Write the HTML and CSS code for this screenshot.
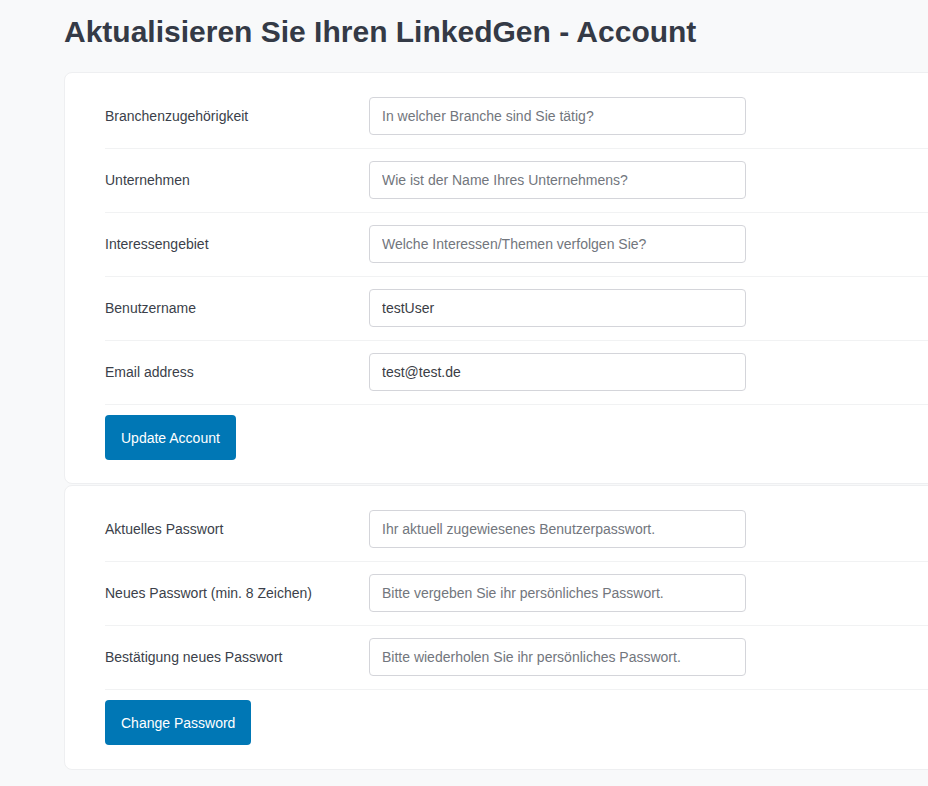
FILE: index.html
```html
<!DOCTYPE html>
<html lang="de">
<head>
<meta charset="utf-8">
<title>Account</title>
<link rel="stylesheet" href="styles.css">
</head>
<body>
<div class="page">
  <h1 class="title">Aktualisieren Sie Ihren LinkedGen - Account</h1>

  <form class="card">
    <div class="row">
      <label class="label">Branchenzugehörigkeit</label>
      <input class="input" type="text" placeholder="In welcher Branche sind Sie tätig?">
    </div>
    <div class="row">
      <label class="label">Unternehmen</label>
      <input class="input" type="text" placeholder="Wie ist der Name Ihres Unternehmens?">
    </div>
    <div class="row">
      <label class="label">Interessengebiet</label>
      <input class="input" type="text" placeholder="Welche Interessen/Themen verfolgen Sie?">
    </div>
    <div class="row">
      <label class="label">Benutzername</label>
      <input class="input" type="text" value="testUser">
    </div>
    <div class="row">
      <label class="label">Email address</label>
      <input class="input" type="text" value="test@test.de">
    </div>
    <button class="btn" type="button">Update Account</button>
  </form>

  <form class="card card-second">
    <div class="row">
      <label class="label">Aktuelles Passwort</label>
      <input class="input" type="text" placeholder="Ihr aktuell zugewiesenes Benutzerpasswort.">
    </div>
    <div class="row">
      <label class="label">Neues Passwort (min. 8 Zeichen)</label>
      <input class="input" type="text" placeholder="Bitte vergeben Sie ihr persönliches Passwort.">
    </div>
    <div class="row">
      <label class="label">Bestätigung neues Passwort</label>
      <input class="input" type="text" placeholder="Bitte wiederholen Sie ihr persönliches Passwort.">
    </div>
    <button class="btn" type="button">Change Password</button>
  </form>
</div>
</body>
</html>
```

FILE: styles.css
```css
html, body {
  margin: 0;
  padding: 0;
  background: #f8f9fa;
  overflow: hidden;
}

body {
  font-family: "Liberation Sans", Arial, sans-serif;
  font-size: 14px;
  color: #374151;
}

.page {
  padding: 14px 0 0 64px;
  width: 1100px;
}

.title {
  margin: 0 0 22px 0;
  font-size: 30px;
  line-height: 36px;
  font-weight: bold;
  color: #343a46;
}

.card {
  display: block;
  background: #ffffff;
  border: 1px solid #eeeff1;
  border-radius: 8px;
  padding: 12px 0 23px 40px;
  margin: 0;
}

.card-second {
  margin-top: 1px;
  padding-bottom: 24px;
}

.row {
  display: flex;
  align-items: center;
  padding: 12px 0 13px 0;
  border-bottom: 1px solid #f1f2f3;
}

.label {
  width: 264px;
  flex: none;
  color: #3b3f4a;
  font-size: 14px;
}

.input {
  box-sizing: border-box;
  width: 377px;
  height: 38px;
  padding: 0 12px;
  border: 1px solid #d4d5da;
  border-radius: 4px;
  font-family: "Liberation Sans", Arial, sans-serif;
  font-size: 14px;
  color: #3a3d45;
  background: #ffffff;
  outline: none;
}

.input::placeholder {
  color: #72767d;
  opacity: 1;
}

.btn {
  display: block;
  margin-top: 10px;
  height: 45px;
  padding: 0 16px;
  border: none;
  border-radius: 4px;
  background: #0077b5;
  color: #ffffff;
  font-family: "Liberation Sans", Arial, sans-serif;
  font-size: 14px;
  cursor: pointer;
}
```
